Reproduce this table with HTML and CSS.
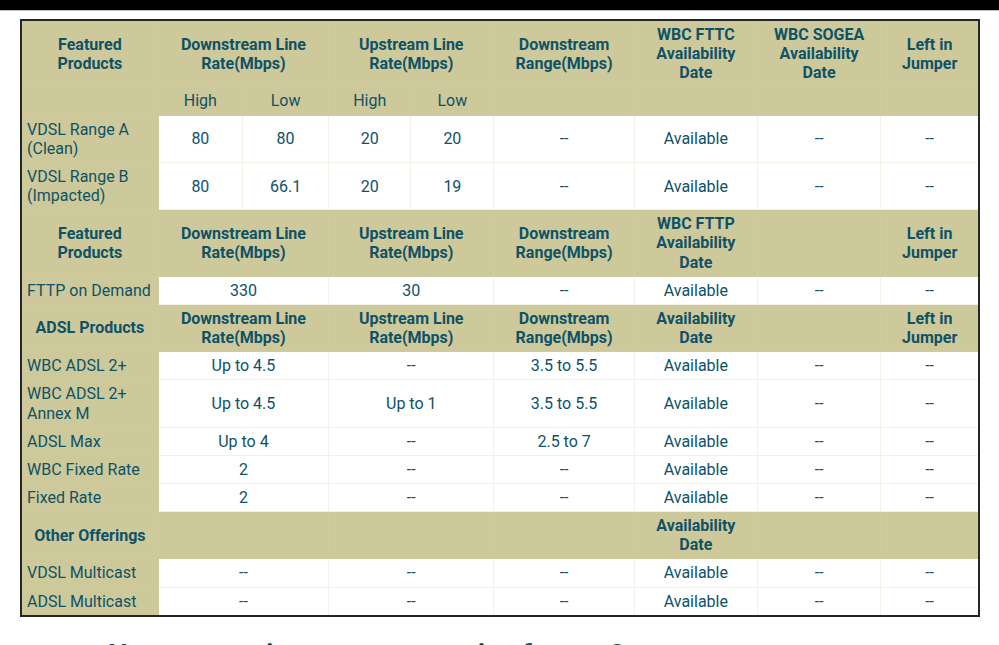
FILE: index.html
```html
<!DOCTYPE html>
<html lang="en">
<head>
<meta charset="utf-8">
<title>Product availability</title>
<link rel="stylesheet" href="styles.css">
</head>
<body>
<div class="topbar"></div>
<main class="content">
<table class="avail">
<colgroup>
<col class="c-label"><col class="c-dh"><col class="c-dl"><col class="c-uh"><col class="c-ul"><col class="c-rng"><col class="c-fttc"><col class="c-sogea"><col class="c-jump">
</colgroup>
<tbody>
<tr class="head">
<th class="lab">Featured<br>Products</th>
<th colspan="2">Downstream Line<br>Rate(Mbps)</th>
<th colspan="2">Upstream Line<br>Rate(Mbps)</th>
<th>Downstream<br>Range(Mbps)</th>
<th>WBC FTTC<br>Availability<br>Date</th>
<th>WBC SOGEA<br>Availability<br>Date</th>
<th>Left in<br>Jumper</th>
</tr>
<tr class="head sub">
<th class="lab"></th>
<th>High</th><th>Low</th><th>High</th><th>Low</th>
<th></th><th></th><th></th><th></th>
</tr>
<tr>
<td class="lab">VDSL Range A<br>(Clean)</td>
<td>80</td><td>80</td><td>20</td><td>20</td><td>--</td><td>Available</td><td>--</td><td>--</td>
</tr>
<tr>
<td class="lab">VDSL Range B<br>(Impacted)</td>
<td>80</td><td>66.1</td><td>20</td><td>19</td><td>--</td><td>Available</td><td>--</td><td>--</td>
</tr>
<tr class="head">
<th class="lab">Featured<br>Products</th>
<th colspan="2">Downstream Line<br>Rate(Mbps)</th>
<th colspan="2">Upstream Line<br>Rate(Mbps)</th>
<th>Downstream<br>Range(Mbps)</th>
<th>WBC FTTP<br>Availability<br>Date</th>
<th></th>
<th>Left in<br>Jumper</th>
</tr>
<tr>
<td class="lab">FTTP on Demand</td>
<td colspan="2">330</td><td colspan="2">30</td><td>--</td><td>Available</td><td>--</td><td>--</td>
</tr>
<tr class="head">
<th class="lab">ADSL Products</th>
<th colspan="2">Downstream Line<br>Rate(Mbps)</th>
<th colspan="2">Upstream Line<br>Rate(Mbps)</th>
<th>Downstream<br>Range(Mbps)</th>
<th>Availability<br>Date</th>
<th></th>
<th>Left in<br>Jumper</th>
</tr>
<tr>
<td class="lab">WBC ADSL 2+</td>
<td colspan="2">Up to 4.5</td><td colspan="2">--</td><td>3.5 to 5.5</td><td>Available</td><td>--</td><td>--</td>
</tr>
<tr>
<td class="lab">WBC ADSL 2+<br>Annex M</td>
<td colspan="2">Up to 4.5</td><td colspan="2">Up to 1</td><td>3.5 to 5.5</td><td>Available</td><td>--</td><td>--</td>
</tr>
<tr>
<td class="lab">ADSL Max</td>
<td colspan="2">Up to 4</td><td colspan="2">--</td><td>2.5 to 7</td><td>Available</td><td>--</td><td>--</td>
</tr>
<tr>
<td class="lab">WBC Fixed Rate</td>
<td colspan="2">2</td><td colspan="2">--</td><td>--</td><td>Available</td><td>--</td><td>--</td>
</tr>
<tr>
<td class="lab">Fixed Rate</td>
<td colspan="2">2</td><td colspan="2">--</td><td>--</td><td>Available</td><td>--</td><td>--</td>
</tr>
<tr class="head">
<th class="lab">Other Offerings</th>
<th colspan="2"></th><th colspan="2"></th><th></th>
<th>Availability<br>Date</th>
<th></th><th></th>
</tr>
<tr>
<td class="lab">VDSL Multicast</td>
<td colspan="2">--</td><td colspan="2">--</td><td>--</td><td>Available</td><td>--</td><td>--</td>
</tr>
<tr>
<td class="lab">ADSL Multicast</td>
<td colspan="2">--</td><td colspan="2">--</td><td>--</td><td>Available</td><td>--</td><td>--</td>
</tr>
</tbody>
</table>
<h2 class="next-title">How can we improve our service for you?</h2>
</main>
</body>
</html>
```

FILE: styles.css
```css
html, body {
  margin: 0;
  padding: 0;
  background: #ffffff;
}
body {
  font-family: Roboto, "Liberation Sans", sans-serif;
  color: #0e5266;
}
.topbar {
  height: 10px;
  background: #000000;
  border-bottom: 1px solid #bdbdbd;
}
.content {
  padding: 8px 19px 0 20px;
}
.avail {
  width: 960px;
  table-layout: fixed;
  border-collapse: collapse;
  border: 2px solid #262626;
  font-size: 16px;
  line-height: 19.15px;
}
.c-label { width: 137px; }
.c-dh { width: 84px; }
.c-dl { width: 86px; }
.c-uh { width: 82px; }
.c-ul { width: 83px; }
.c-rng { width: 140px; }
.c-fttc { width: 123px; }
.c-sogea { width: 123px; }
.c-jump { width: 98px; }
.avail td, .avail th {
  padding: 4px 5px;
  border: 1px solid #f4f2e6;
  text-align: center;
  vertical-align: middle;
  background: #ffffff;
  font-weight: 400;
}
.avail .head th {
  background: #cdc99b;
  border-color: #d0cca0;
  font-weight: 700;
}
.avail .head.sub th {
  font-weight: 400;
}
.avail td.lab {
  background: #cdc99b;
  border-color: #d0cca0;
  text-align: left;
}
.next-title {
  margin: 21px 0 0 88px;
  font-size: 28px;
  line-height: 33px;
  font-weight: 700;
  color: #0e5266;
}
```
